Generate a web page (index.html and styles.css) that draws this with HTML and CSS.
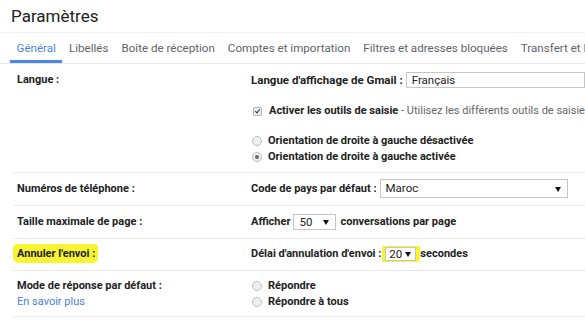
FILE: index.html
```html
<!DOCTYPE html>
<html lang="fr">
<head>
<meta charset="utf-8">
<title>Paramètres</title>
<link rel="stylesheet" href="styles.css">
</head>
<body>
<div class="page">
  <header class="title-bar">
    <h1 class="title">Paramètres</h1>
  </header>
  <nav class="tabs">
    <span class="tab active">Général</span>
    <span class="tab">Libellés</span>
    <span class="tab">Boîte de réception</span>
    <span class="tab">Comptes et importation</span>
    <span class="tab">Filtres et adresses bloquées</span>
    <span class="tab">Transfert et POP/IMAP</span>
  </nav>

  <section class="settings">
    <div class="row row-lang">
      <div class="label">Langue :</div>
      <div class="value">
        <div class="line">
          <span class="strong wide">Langue d'affichage de Gmail :</span>
          <span class="select select-lang">Français</span>
        </div>
        <div class="line gap-check">
          <span class="checkbox"></span>
          <span class="strong">Activer les outils de saisie</span><span class="muted">&nbsp;- Utilisez les différents outils de saisie pour écrire dans votre langue</span>
        </div>
        <div class="line gap-radio">
          <span class="radio"></span>
          <span class="strong">Orientation de droite à gauche désactivée</span>
        </div>
        <div class="line">
          <span class="radio checked"></span>
          <span class="strong">Orientation de droite à gauche activée</span>
        </div>
      </div>
    </div>

    <div class="row row-phone">
      <div class="label">Numéros de téléphone :</div>
      <div class="value">
        <div class="line">
          <span class="strong">Code de pays par défaut :</span>
          <span class="select select-country">Maroc<span class="caret"></span></span>
        </div>
      </div>
    </div>

    <div class="row row-size">
      <div class="label">Taille maximale de page :</div>
      <div class="value">
        <div class="line">
          <span class="strong">Afficher</span>
          <span class="select select-size">50<span class="caret"></span></span>
          <span class="strong">conversations par page</span>
        </div>
      </div>
    </div>

    <div class="row row-undo">
      <div class="label"><span class="marker marker-label">Annuler l'envoi :</span></div>
      <div class="value">
        <div class="line">
          <span class="strong">Délai d'annulation d'envoi :</span>
          <span class="marker marker-select"><span class="select select-delay">20<span class="caret"></span></span></span><span class="strong">secondes</span>
        </div>
      </div>
    </div>

    <div class="row row-reply">
      <div class="label">
        <div class="line">Mode de réponse par défaut :</div>
        <div class="line link">En savoir plus</div>
      </div>
      <div class="value">
        <div class="line">
          <span class="radio"></span>
          <span class="strong">Répondre</span>
        </div>
        <div class="line">
          <span class="radio"></span>
          <span class="strong">Répondre à tous</span>
        </div>
      </div>
    </div>
  </section>
</div>
</body>
</html>
```

FILE: styles.css
```css
html, body {
  margin: 0;
  padding: 0;
  background: #ffffff;
}

body {
  width: 585px;
  height: 320px;
  overflow: hidden;
  font-family: Roboto, "Liberation Sans", Arial, sans-serif;
  color: #222222;
}

.page {
  width: 585px;
}

.title-bar {
  height: 32px;
  border-bottom: 1px solid #f1f1f1;
  padding-left: 11px;
}

.title {
  margin: 0;
  font-size: 17px;
  font-weight: 400;
  line-height: 32px;
  color: #222222;
}

.tabs {
  display: flex;
  height: 30px;
  padding-left: 10px;
  border-bottom: 1px solid #e6e6e6;
  white-space: nowrap;
  overflow: hidden;
}

.tab {
  flex: none;
  padding: 0 6.5px;
  font-size: 11.6px;
  line-height: 30px;
  color: #5f6368;
  box-sizing: border-box;
  height: 30px;
}

.tab.active {
  color: #4a86e8;
  border-bottom: 3px solid #4a86e8;
}

.settings {
  margin-left: 13px;
}

.row {
  display: grid;
  grid-template-columns: 234px 1fr;
  border-bottom: 1px solid #e8e8e8;
  padding-left: 4px;
  font-size: 11px;
  white-space: nowrap;
  overflow: hidden;
}

.label {
  font-weight: 700;
  line-height: 16px;
  color: #222222;
}

.value {
  line-height: 16px;
  overflow: hidden;
}

.line {
  display: flex;
  align-items: center;
  height: 16px;
}

.strong {
  font-weight: 700;
  color: #222222;
}

.wide {
  font-size: 11.5px;
}

.muted {
  color: #666666;
}

.link {
  color: #4a7fd8;
  font-weight: 400;
}

.row-lang {
  padding-top: 8px;
  padding-bottom: 7px;
}

.gap-check {
  margin-top: 15px;
}

.gap-radio {
  margin-top: 14px;
}

.row-phone {
  padding-top: 6px;
  padding-bottom: 7px;
}

.row-phone .label,
.row-phone .line {
  height: 19px;
  line-height: 19px;
}

.row-size {
  padding-top: 8px;
  padding-bottom: 8px;
}

.row-undo {
  padding-top: 7px;
  padding-bottom: 8px;
}

.row-reply {
  padding-top: 7px;
  padding-bottom: 6px;
}

/* selects */
.select {
  position: relative;
  display: inline-flex;
  align-items: center;
  box-sizing: border-box;
  border: 1px solid #c6c6c6;
  background: #ffffff;
  font-weight: 400;
  font-size: 11.5px;
  color: #222222;
  padding-left: 5px;
  margin-left: 3px;
}

.select-lang {
  width: 200px;
  height: 16px;
}

.select-country {
  width: 188px;
  height: 19px;
}

.select-size {
  width: 43px;
  height: 16px;
  margin-right: 4px;
}

.select-delay {
  width: 31px;
  height: 14px;
  margin-left: 0;
  padding-left: 3px;
}

.caret {
  position: absolute;
  right: 6px;
  top: 50%;
  margin-top: -2px;
  width: 0;
  height: 0;
  border-left: 3px solid transparent;
  border-right: 3px solid transparent;
  border-top: 5px solid #111111;
}

.select-delay .caret {
  right: 4px;
}

/* checkbox & radio */
.checkbox {
  flex: none;
  position: relative;
  width: 9px;
  height: 9px;
  box-sizing: border-box;
  border: 1px solid #b8b8b8;
  border-radius: 1px;
  background: #eeeeee;
  margin: 0 7px 0 2px;
}

.checkbox::after {
  content: "";
  position: absolute;
  left: 2px;
  top: 0px;
  width: 2px;
  height: 4px;
  border-right: 1.5px solid #333333;
  border-bottom: 1.5px solid #333333;
  transform: rotate(40deg);
}

.radio {
  flex: none;
  position: relative;
  width: 10px;
  height: 10px;
  box-sizing: border-box;
  border: 1px solid #bdbdbd;
  border-radius: 50%;
  background: #efefef;
  margin: 0 6px 0 1px;
}

.radio.checked::after {
  content: "";
  position: absolute;
  left: 2px;
  top: 2px;
  width: 4px;
  height: 4px;
  border-radius: 50%;
  background: #6b6b6b;
}

/* yellow marker highlights */
.marker {
  background: #f8f432;
}

.marker-label {
  display: inline-block;
  margin: -2px 0 -1px -5px;
  padding: 2px 3px 1px 5px;
  border-radius: 6px 3px 5px 8px;
  line-height: 16px;
}

.marker-select {
  display: inline-flex;
  align-items: center;
  margin-left: 1px;
  padding: 5px 4px 5px 3px;
  margin-top: -5px;
  margin-bottom: -5px;
  border-radius: 7px 5px 9px 6px;
}
```
